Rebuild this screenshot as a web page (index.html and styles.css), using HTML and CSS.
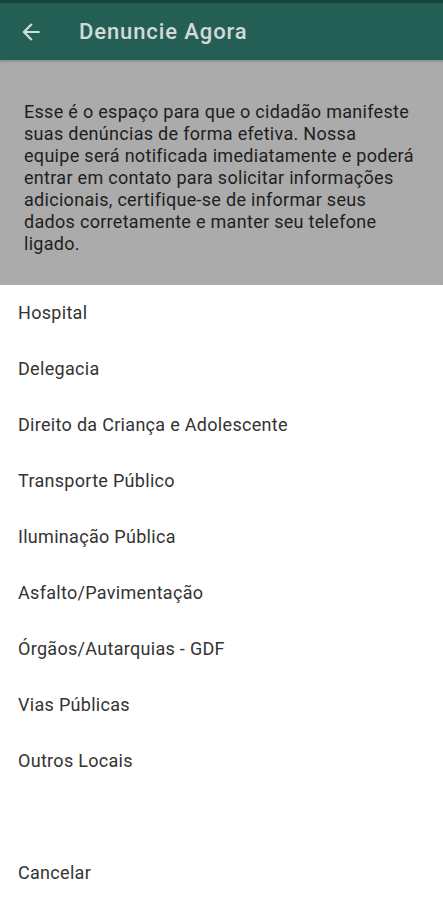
FILE: index.html
```html
<!DOCTYPE html>
<html lang="pt-BR">
<head>
<meta charset="UTF-8" />
<meta name="viewport" content="width=device-width, initial-scale=1" />
<title>Denuncie Agora</title>
<link rel="stylesheet" href="styles.css">
</head>
<body>

<header class="toolbar">
  <button class="voltar" aria-label="Voltar">
    <svg viewBox="0 0 24 24" width="26" height="26"><path d="M20 11H7.83l5.59-5.59L12 4l-8 8 8 8 1.41-1.41L7.83 13H20v-2z" fill="currentColor"/></svg>
  </button>
  <h1>Denuncie Agora</h1>
</header>

<div class="aviso">
  <p>Esse é o espaço para que o cidadão manifeste<br>
  suas denúncias de forma efetiva. Nossa<br>
  equipe será notificada imediatamente e poderá<br>
  entrar em contato para solicitar informações<br>
  adicionais, certifique-se de informar seus<br>
  dados corretamente e manter seu telefone<br>
  ligado.</p>
</div>

<ul class="opcoes">
  <li>Hospital</li>
  <li>Delegacia</li>
  <li>Direito da Criança e Adolescente</li>
  <li>Transporte Público</li>
  <li>Iluminação Pública</li>
  <li>Asfalto/Pavimentação</li>
  <li>Órgãos/Autarquias - GDF</li>
  <li>Vias Públicas</li>
  <li>Outros Locais</li>
</ul>

<div class="cancelar">Cancelar</div>

</body>
</html>
```

FILE: styles.css
```css
body {
  font-family: Roboto, 'Noto Sans', sans-serif;
  background: #ffffff;
  margin: 0; padding: 0;
}
.toolbar {
  display: flex;
  align-items: center;
  height: 57px;
  border-top: 3px solid #17453e;
  background: #235f55;
  color: #d3dbd8;
}
.voltar {
  display: flex;
  align-items: center;
  justify-content: center;
  width: 26px;
  height: 26px;
  margin: 0 35px 0 18px;
  padding: 0;
  border: none;
  background: none;
  color: #d3dbd8;
}
.toolbar h1 {
  margin: 0;
  font-size: 22px;
  font-weight: 500;
  letter-spacing: 0.9px;
}
.aviso {
  background: #ababab;
  padding: 41px 0 30px 24px;
  box-shadow: inset 0 3px 3px -2px rgba(0,0,0,0.25);
}
.aviso p {
  margin: 0;
  font-size: 18px;
  line-height: 22px;
  letter-spacing: 0.3px;
  white-space: nowrap;
  color: #1e1e1e;
}
.opcoes {
  list-style: none;
  margin: 0;
  padding: 0;
}
.opcoes li, .cancelar {
  height: 56px;
  line-height: 56px;
  padding: 0 18px;
  font-size: 18px;
  letter-spacing: 0.3px;
  color: #333333;
}
.cancelar {
  margin-top: 56px;
}
```
